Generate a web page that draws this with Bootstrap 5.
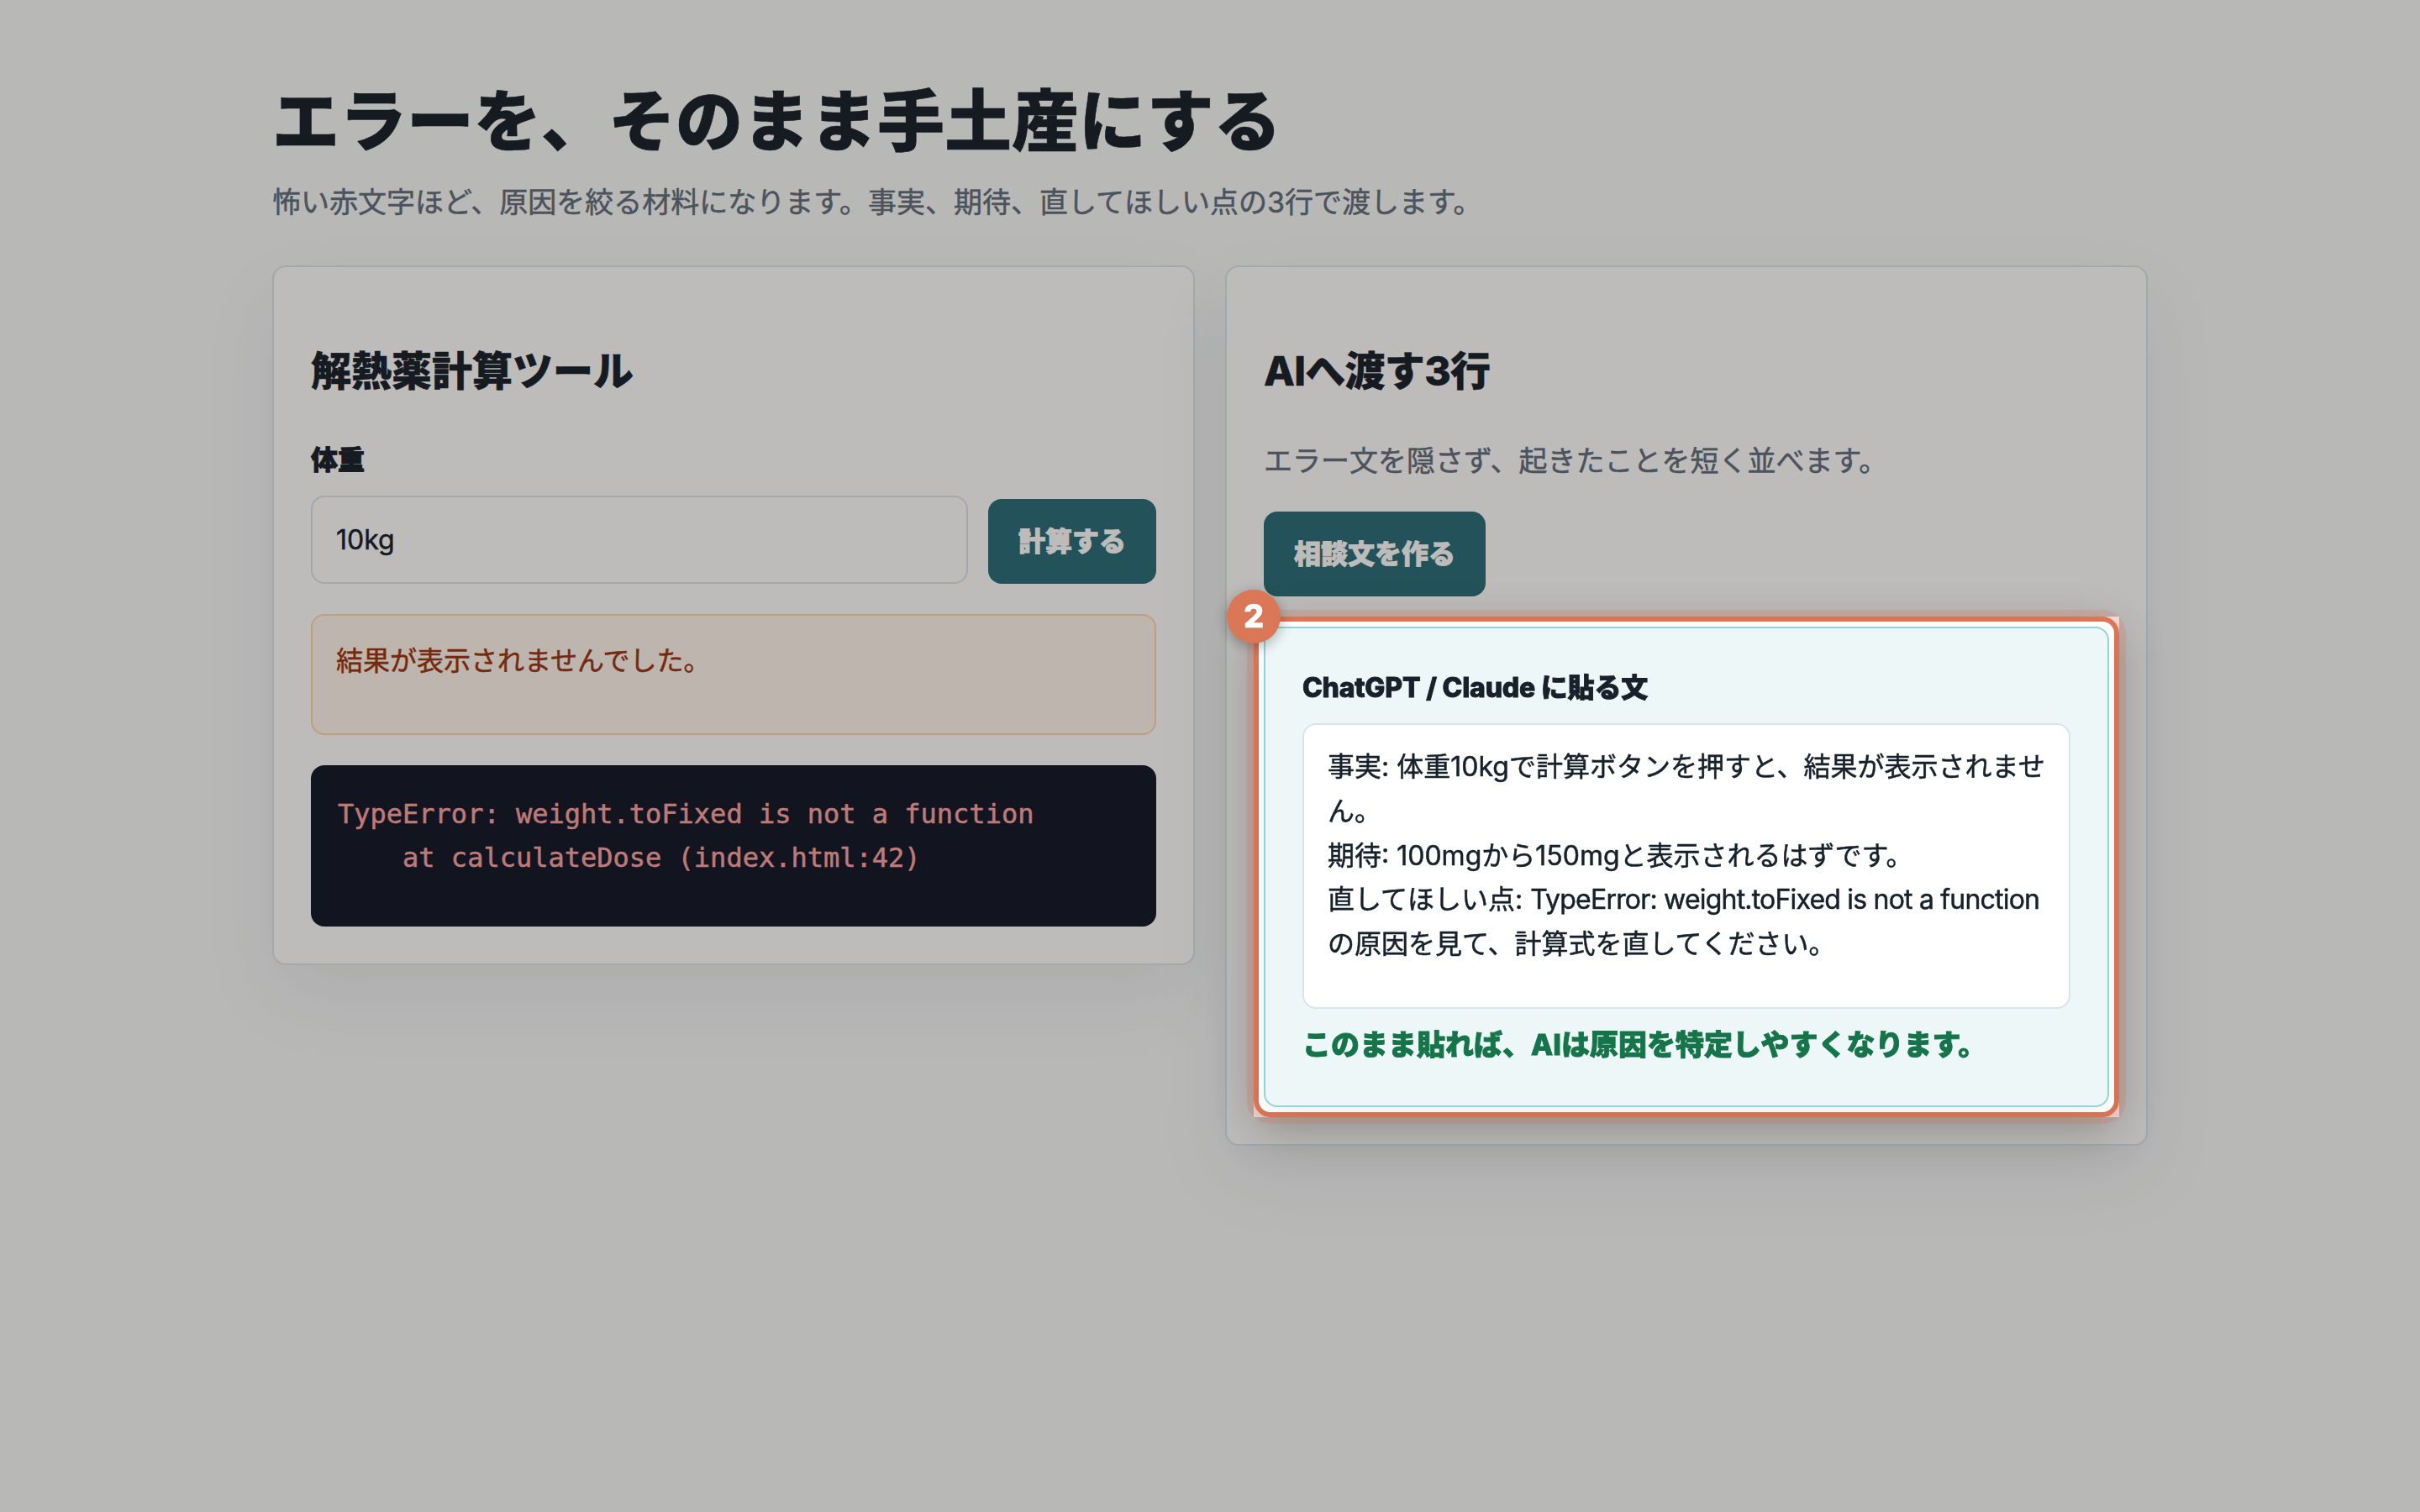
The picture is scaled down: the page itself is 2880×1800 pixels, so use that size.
<!DOCTYPE html>
<html lang="ja">
<head>
  <meta charset="UTF-8" />
  <meta name="viewport" content="width=device-width, initial-scale=1" />
  <title>エラーを、そのまま手土産にする</title>
  <link href="https://cdn.jsdelivr.net/npm/bootstrap@5.3.2/dist/css/bootstrap.min.css" rel="stylesheet" />
  <style>
    body {
      background-color: #f7fafa;
      color: #17212b;
      font-family: Inter, "Noto Sans CJK JP", sans-serif;
      font-size: 32px;
      line-height: 1.65;
      min-height: 100vh;
      overflow: hidden;
      -webkit-text-stroke: 0.5px;
    }
    .page {
      width: 2232px;
      padding-top: 94px;
    }
    .page-title {
      font-size: 80px;
      font-weight: 800;
      line-height: 1.25;
      margin-bottom: 19px;
    }
    .note {
      color: #626e7c;
      font-size: 34px;
    }
    .page-title + .note {
      margin-bottom: 47px;
    }
    .columns {
      gap: 36px;
    }
    .panel {
      border: 2px solid #d9e3ea;
      border-radius: 16px;
      padding: 44px;
      box-shadow: 0 36px 90px rgba(23, 48, 53, 0.08);
    }
    .panel h2 {
      font-size: 48px;
      font-weight: 800;
      line-height: 79px;
      margin: 40px 0;
    }
    .tight-title {
      letter-spacing: -0.7px;
    }
    .tight-label {
      letter-spacing: -0.2px;
    }
    .tight-error {
      letter-spacing: -0.8px;
    }
    .field-label {
      display: block;
      font-weight: 800;
      padding-top: 1px;
      margin-bottom: 15px;
    }
    .field-label,
    .btn-calc,
    .done {
      -webkit-text-stroke: 0.9px;
    }
    .form-control {
      border: 2px solid #d9e3ea;
      border-radius: 16px;
      color: inherit;
      font-size: 32px;
      height: 105px;
      padding: 24px 28px;
    }
    .btn-calc,
    .btn-calc:hover {
      background-color: #2a6d79;
      border: 0;
      border-radius: 16px;
      color: #fff;
      font-size: 32px;
      font-weight: 800;
      line-height: 53px;
      padding: 24px 36px;
    }
    .result {
      background-color: #fff7ed;
      border: 2px solid #fed7aa;
      border-radius: 16px;
      color: #9a3412;
      height: 144px;
      margin-top: 36px;
      padding: 28px;
    }
    .console {
      background-color: #111827;
      border-radius: 16px;
      color: #fca5a5;
      font-family: "DejaVu Sans Mono", monospace;
      font-size: 32px;
      line-height: 52px;
      height: 192px;
      margin: 36px 0 0;
      padding: 32px;
    }

    /* dimmed page with one highlighted area */
    .dim {
      background-color: rgba(20, 16, 9, 0.28);
      z-index: 10;
    }
    .spot {
      background-color: #fff;
      margin: 24px -12px -12px;
      padding: 12px;
      z-index: 20;
    }
    .spot-ring {
      inset: 0;
      border: 6px solid #d97757;
      border-radius: 20px;
      box-shadow: 0 0 0 8px rgba(217, 119, 87, 0.25), 0 16px 56px rgba(0, 0, 0, 0.22);
    }
    .spot-number {
      left: -32px;
      top: -32px;
      width: 64px;
      height: 64px;
      background-color: #d97757;
      color: #fff;
      font-size: 38px;
      font-weight: 800;
      padding-bottom: 2px;
      box-shadow: 0 4px 16px rgba(0, 0, 0, 0.3);
    }
    .message {
      background-color: #edf7f8;
      border: 2px solid #93d4d6;
      border-radius: 16px;
      height: 572px;
      padding: 44px;
      box-shadow: 0 16px 40px rgba(23, 33, 43, 0.06);
    }
    .message-text {
      background-color: #fff;
      border: 2px solid #d9e3ea;
      border-radius: 16px;
      height: 340px;
      padding: 24px 28px;
      white-space: pre-wrap;
    }
    .done {
      color: #16744a;
      font-size: 34px;
      font-weight: 800;
      margin: 15px 0 0;
    }
  </style>
</head>
<body>
  <main class="page mx-auto">
    <h1 class="page-title">エラーを、そのまま手土産にする</h1>
    <p class="note">怖い赤文字ほど、原因を絞る材料になります。事実、期待、直してほしい点の3行で渡します。</p>

    <div class="columns d-flex align-items-start">
      <!-- Calculator -->
      <section class="panel bg-white w-50">
        <h2>解熱薬計算ツール</h2>
        <label class="field-label" for="weight">体重</label>
        <div class="d-flex align-items-end gap-4">
          <input type="text" id="weight" class="form-control" value="10kg" />
          <button class="btn btn-calc text-nowrap">計算する</button>
        </div>
        <div class="result">結果が表示されませんでした。</div>
        <pre class="console">TypeError: weight.toFixed is not a function
    at calculateDose (index.html:42)</pre>
      </section>

      <!-- Message for the AI -->
      <section class="panel bg-white w-50">
        <h2 class="tight-title">AIへ渡す3行</h2>
        <p class="note" style="margin-bottom: 32px">エラー文を隠さず、起きたことを短く並べます。</p>
        <button class="btn btn-calc d-block">相談文を作る</button>
        <div class="spot position-relative">
          <div class="spot-ring position-absolute"></div>
          <div class="message position-relative">
            <strong class="field-label tight-label">ChatGPT / Claude に貼る文</strong>
            <div class="message-text">事実: 体重10kgで計算ボタンを押すと、結果が表示されません。
期待: 100mgから150mgと表示されるはずです。
直してほしい点: <span class="tight-error">TypeError: weight.toFixed is not a function</span>の原因を見て、計算式を直してください。</div>
            <p class="done">このまま貼れば、AIは原因を特定しやすくなります。</p>
          </div>
          <div class="spot-number position-absolute rounded-circle d-flex align-items-center justify-content-center">2</div>
        </div>
      </section>
    </div>
  </main>
  <div class="dim position-fixed top-0 start-0 w-100 h-100"></div>
  <script src="https://cdn.jsdelivr.net/npm/bootstrap@5.3.2/dist/js/bootstrap.bundle.min.js"></script>
</body>
</html>
